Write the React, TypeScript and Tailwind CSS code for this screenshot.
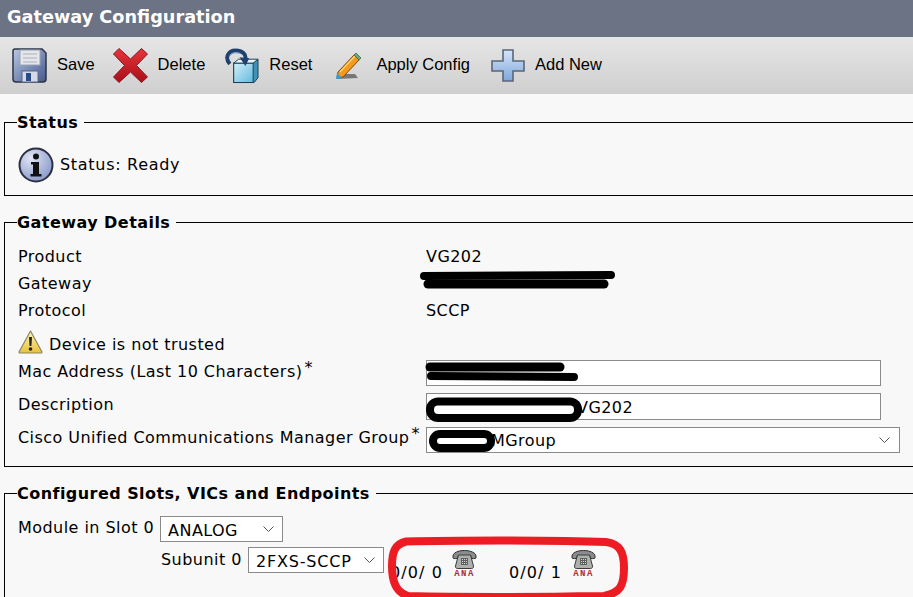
const SaveIcon = () => (
  <svg width="35" height="35" viewBox="0 0 35 35">
    <defs>
      <linearGradient id="saveBody" x1="0" y1="0" x2="1" y2="1">
        <stop offset="0" stopColor="#b9c6e4" />
        <stop offset="1" stopColor="#44598c" />
      </linearGradient>
    </defs>
    <path d="M3 1h27l4 4v26a3 3 0 0 1-3 3H4a3 3 0 0 1-3-3V3a2 2 0 0 1 2-2z" fill="url(#saveBody)" stroke="#2c3444" strokeWidth="1.5" />
    <rect x="8" y="2" width="20" height="15" fill="#e4e6ea" stroke="#9aa3b5" />
    <path d="M11 6h14M11 10h14M11 14h14" stroke="#a9afbb" strokeWidth="1.2" />
    <rect x="10" y="23" width="16" height="11" fill="#d5dae6" stroke="#59678a" />
    <rect x="14" y="25" width="5" height="8" fill="#2b4a88" />
  </svg>
);

const DeleteIcon = () => (
  <svg width="35" height="35" viewBox="0 0 35 35">
    <defs>
      <linearGradient id="delRed" x1="0" y1="0" x2="0" y2="1">
        <stop offset="0" stopColor="#e8343a" />
        <stop offset="1" stopColor="#a80f1a" />
      </linearGradient>
    </defs>
    <path d="M6 0.5 17.5 11 28.5 0.5 34.5 6 23.5 17.500 34.5 29 28.5 34.5 17.5 24 6 34.5 0.5 29 11.5 17.500 0.5 6z" fill="url(#delRed)" stroke="#8b1720" strokeWidth="1" />
  </svg>
);

const ResetIcon = () => (
  <svg width="36" height="36" viewBox="0 0 36 36">
    <defs>
      <linearGradient id="cubeFace" x1="0" y1="0" x2="1" y2="1">
        <stop offset="0" stopColor="#d2f0fa" />
        <stop offset="1" stopColor="#62b9dc" />
      </linearGradient>
    </defs>
    <path d="M10 15h20l5-4v19l-4 5H10z" fill="#3e93b8" stroke="#1f3d52" strokeWidth="1" />
    <rect x="10" y="15" width="20" height="20" fill="url(#cubeFace)" stroke="#1f3d52" />
    <path d="M10 15l5-4h20l-5 4z" fill="#e6f5fa" stroke="#1f3d52" />
    <path d="M6 16C0 9 5 2 12 2s11 4 10 9" fill="none" stroke="#20406e" strokeWidth="4" />
    <path d="M16 9l10 1-4 8z" fill="#20406e" />
    <path d="M6 7C9 4 13 4 16 5" fill="none" stroke="#7fa2cf" strokeWidth="1.2" />
  </svg>
);

const PencilIcon = () => (
  <svg width="34" height="28" viewBox="0 0 34 28">
    <path d="M5 27l21-1-3-4H10z" fill="#777" />
    <path d="M6 20 22 3l5 5-16 17-6 1z" fill="#f39a1e" stroke="#7a4a10" strokeWidth="1" />
    <path d="M8 20 23 4" stroke="#ffd26a" strokeWidth="1.5" />
    <path d="M22 3l2-2 5 5-2 2z" fill="#5fae7f" stroke="#55603a" strokeWidth="0.8" />
    <path d="M5 21l-1 6 6-1z" fill="#2e9fd6" />
  </svg>
);

const PlusIcon = () => (
  <svg width="34" height="33" viewBox="0 0 34 33">
    <defs>
      <linearGradient id="plusFill" x1="0" y1="0" x2="0" y2="1">
        <stop offset="0" stopColor="#d5e5f8" />
        <stop offset="1" stopColor="#7ea7dc" />
      </linearGradient>
    </defs>
    <path d="M12 1h10v11h11v10H22v10H12V22H1V12h11z" fill="url(#plusFill)" stroke="#5b6678" strokeWidth="1.6" />
  </svg>
);

const InfoIcon = () => (
  <svg width="36" height="36" viewBox="0 0 36 36">
    <defs>
      <radialGradient id="infoFill" cx="0.35" cy="0.3" r="0.8">
        <stop offset="0" stopColor="#e0e5f4" />
        <stop offset="1" stopColor="#8494c6" />
      </radialGradient>
    </defs>
    <circle cx="18" cy="18" r="16.5" fill="url(#infoFill)" stroke="#2c3040" strokeWidth="2" />
    <circle cx="18" cy="9.5" r="3" fill="#111" />
    <path d="M13 15h8v12h2.500v2.500h-11V27H15V17.500h-2z" fill="#111" />
  </svg>
);

const WarnIcon = () => (
  <svg width="25" height="24" viewBox="0 0 25 24">
    <defs>
      <linearGradient id="warnFill" x1="0" y1="0" x2="0" y2="1">
        <stop offset="0" stopColor="#fff3b0" />
        <stop offset="1" stopColor="#e8c23c" />
      </linearGradient>
    </defs>
    <path d="M12.500 1 24 22a1 1 0 0 1-1 1H2a1 1 0 0 1-1-1z" fill="url(#warnFill)" stroke="#8a8468" strokeWidth="1.2" strokeLinejoin="round" />
    <path d="M11 7h3l-.6 9h-1.800z" fill="#222" />
    <circle cx="12.500" cy="19" r="1.800" fill="#222" />
  </svg>
);

const PhonePort = () => (
  <div className="flex flex-col items-center w-[25px]">
    <svg width="25" height="19" viewBox="0 0 25 19">
      <path d="M1 8V6c0-3 5-5.500 11.500-5.500S24 3 24 6v2c0 .8-5 .8-5 0V6H6v2c0 .8-5 .8-5 0z" fill="#8a8d8e" stroke="#2f3132" strokeWidth="1" />
      <path d="M6.500 5h12l3 11a2 2 0 0 1-2 2.500H5.500a2 2 0 0 1-2-2.500z" fill="#aeb0ae" stroke="#3a3c3c" strokeWidth="1" />
      <rect x="9" y="8" width="7" height="7" fill="#5e6060" />
      <path d="M10 9.500h5M10 11.500h5M10 13.500h5" stroke="#d2d3d2" strokeDasharray="1 1" />
    </svg>
    <span className="mt-[1px] text-[9px] leading-[9px] font-bold tracking-[1.500px] text-[#b22a35] font-['Liberation_Mono',monospace]">ANA</span>
  </div>
);

const ToolButton = ({ icon, label, iconWidth, className = "" }: { icon: React.ReactNode; label: string; iconWidth: string; className?: string }) => (
  <div className={"flex items-center gap-[10px] " + className}>
    <div className={iconWidth + " flex items-center justify-center"}>{icon}</div>
    <span className="mb-[3px] text-[16.5px] text-black font-['Liberation_Sans',sans-serif]">{label}</span>
  </div>
);

const Section = ({ title, className, children }: { title: string; className: string; children: React.ReactNode }) => (
  <fieldset className={"ml-1 -mr-3 border border-black px-[13px] " + className}>
    <legend className="relative top-[1px] -ml-[1px] font-bold text-[16px] leading-[18px]">{title}&nbsp;</legend>
    {children}
  </fieldset>
);

const Asterisk = () => <span className="relative -top-[4px] ml-[2px] text-[16px] leading-none">*</span>;

function Chevron() {
  return (
    <svg width="11" height="6" viewBox="0 0 11 6" className="shrink-0">
      <path d="M0.500 0.500 5.500 5.500 10.500 0.500" fill="none" stroke="#555" strokeWidth="1" />
    </svg>
  );
}

export default function App() {
  return (
    <div className="relative w-[913px] h-[597px] overflow-hidden bg-[#f8f8f8] text-[16px] tracking-[0.45px] leading-[20px] text-black font-['DejaVu_Sans',sans-serif]">
      <div className="h-[37px] bg-[#6b7385] pl-[7px] pt-[6px] text-[17.7px] tracking-normal leading-[22px] font-bold text-white">
        Gateway Configuration
      </div>
      <div className="flex h-[57px] items-center gap-[19px] pl-[12px] tracking-normal bg-gradient-to-b from-[#e6e6e6] to-[#cfcfcf]">
        <ToolButton icon={<SaveIcon />} label="Save" iconWidth="w-[35px]" />
        <ToolButton icon={<DeleteIcon />} label="Delete" iconWidth="w-[35px]" className="-ml-[1px]" />
        <ToolButton icon={<ResetIcon />} label="Reset" iconWidth="w-[35px]" />
        <ToolButton icon={<PencilIcon />} label="Apply Config" iconWidth="w-[34px]" className="ml-[1px]" />
        <ToolButton icon={<PlusIcon />} label="Add New" iconWidth="w-[34px]" className="ml-[2px]" />
      </div>

      <Section title="Status" className="mt-[19px] h-[83px]">
        <div className="mt-[16px] flex items-center gap-[6px]">
          <InfoIcon />
          <span className="tracking-[0.7px]">Status: Ready</span>
        </div>
      </Section>

      <Section title="Gateway Details" className="mt-[17px] h-[254px]">
        <div className="grid grid-cols-[408px_1fr] pt-[16px]">
          <span className="h-[27px]">Product</span>
          <span>VG202</span>
          <span className="h-[27px]">Gateway</span>
          <span></span>
          <span className="h-[27px]">Protocol</span>
          <span>SCCP</span>
        </div>
        <div className="flex h-[26px] items-end gap-[6px]">
          <WarnIcon />
          <span className="leading-[18px]">Device is not trusted</span>
        </div>
        <div className="grid grid-cols-[408px_1fr] gap-y-[7px] pt-[6px]">
          <span className="h-[26px] pt-[2px] whitespace-nowrap">Mac Address (Last 10 Characters)<Asterisk /></span>
          <div className="h-[26px] w-[455px] border border-[#8a8a8a] bg-white" />
          <span className="h-[27px] pt-[2px]">Description</span>
          <div className="h-[27px] w-[455px] border border-[#8a8a8a] bg-white pl-[150px] pt-[4px]">VG202</div>
          <span className="h-[26px] pt-[1px] whitespace-nowrap">Cisco Unified Communications Manager Group<Asterisk /></span>
          <div className="flex h-[26px] w-[474px] items-center justify-between border border-[#8a8a8a] bg-white pl-[64px] pr-[9px]">
            <span className="mt-[2px]">MGroup</span>
            <Chevron />
          </div>
        </div>
      </Section>

      <Section title="Configured Slots, VICs and Endpoints" className="mt-[17px] h-[114px]">
        <div className="flex items-center gap-[6px] pt-[14px]">
          <span className="-mt-[2px] whitespace-nowrap">Module in Slot 0</span>
          <div className="flex h-[26px] w-[123px] items-center justify-between border border-[#8a8a8a] bg-white pl-[7px] pr-[8px]">
            <span className="mt-[3px]">ANALOG</span>
            <Chevron />
          </div>
        </div>
        <div className="flex items-start pl-[143px] pt-[5px]">
          <span className="mt-[3px] w-[87px] whitespace-nowrap">Subunit 0</span>
          <div className="flex h-[26px] w-[136px] items-center justify-between border border-[#8a8a8a] bg-white pl-[7px] pr-[8px]">
            <span className="mt-[4px] tracking-[0.8px] whitespace-nowrap">2FXS-SCCP</span>
            <Chevron />
          </div>
          <span className="ml-[6px] mt-[16px] tracking-[1.100px] whitespace-pre">0/0/ 0</span>
          <div className="ml-[9px] mt-[3px]"><PhonePort /></div>
          <span className="ml-[32px] mt-[16px] tracking-[1.100px] whitespace-pre">0/0/ 1</span>
          <div className="ml-[9px] mt-[3px]"><PhonePort /></div>
        </div>
      </Section>

      {/* scribbles drawn over the screenshot */}
      <svg className="absolute inset-0 pointer-events-none" width="913" height="597" viewBox="0 0 913 597">
        <path d="M424 276 611 275" stroke="#000" strokeWidth="8" strokeLinecap="round" />
        <path d="M428 284 604 284" stroke="#000" strokeWidth="9" strokeLinecap="round" />
        <path d="M430 367 560 367" stroke="#000" strokeWidth="9" strokeLinecap="round" />
        <path d="M431 376 574 377" stroke="#000" strokeWidth="8" strokeLinecap="round" />
        <rect x="430" y="401.500" width="148" height="16.500" rx="8" fill="#fff" stroke="#000" strokeWidth="8" />
        <rect x="433" y="434" width="58" height="14" rx="7" fill="#fff" stroke="#000" strokeWidth="8" />
        <path d="M406 541.500 C460 540 560 540 606 542 C620 544 624 552 624 568 C624 586 620 593 604 596 C540 597 450 597 408 596 C396 592 392 582 392 566 C392 552 395 544 406 541.500z" fill="none" stroke="#ed1c24" strokeWidth="8" />
      </svg>
    </div>
  );
}
